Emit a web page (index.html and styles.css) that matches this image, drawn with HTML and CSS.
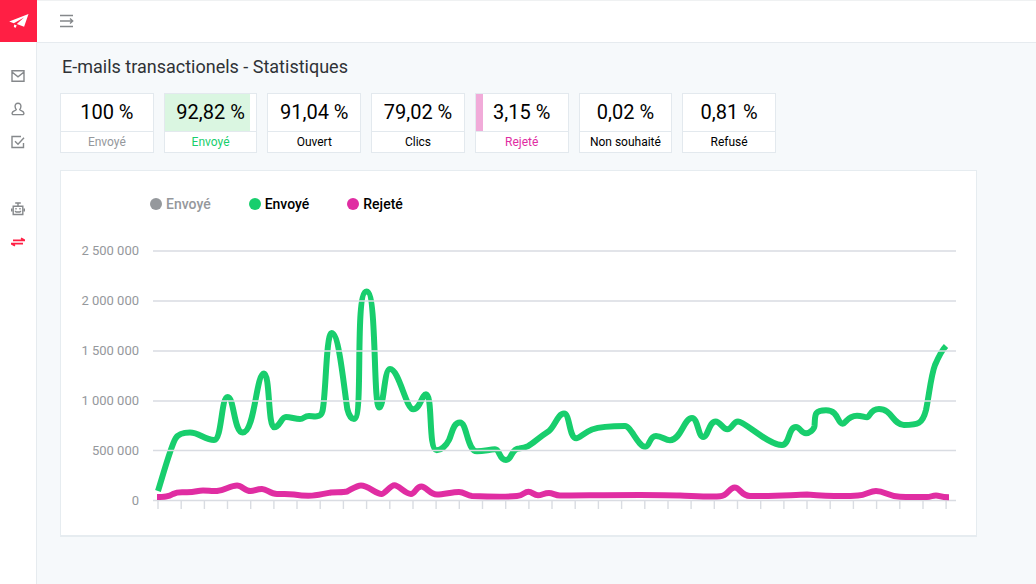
FILE: index.html
```html
<!DOCTYPE html>
<html lang="fr">
<head>
<meta charset="utf-8">
<meta name="viewport" content="width=device-width, initial-scale=1">
<title>E-mails transactionels - Statistiques</title>
<link rel="stylesheet" href="styles.css">
</head>
<body>
<div class="app">
  <aside class="sidebar">
    <a class="logo" href="#" aria-label="Accueil">
      <svg width="20" height="16" viewBox="0 0 20 16" fill="#fff"><path d="M19.500 1 .2 8.400l4.600 1.900L15 4.600 7.800 10.900l7.300 2.800zM5.300 11.600l2.500.9-1.500 2.600-1.500-1.300z"/></svg>
    </a>
    <nav class="nav" aria-label="Menu principal">
      <a class="nav-link" href="#" aria-label="E-mails">
        <svg width="14" height="14" viewBox="0 0 14 14"><path d="M1 1.800h12v10.400H1zM1 3l6 4.800L13 3"/></svg>
      </a>
      <a class="nav-link" href="#" aria-label="Contacts">
        <svg width="14" height="14" viewBox="0 0 14 14"><path d="M7 1.200c2 0 3 1.500 2.900 3.300C9.800 6 9.200 7 8.700 7.600c.3 1.200 3.900 1 4.200 3.500.1.900-.5 1.500-1.400 1.500h-9c-.9 0-1.500-.6-1.400-1.500C1.400 8.600 5 8.800 5.300 7.600 4.800 7 4.200 6 4.100 4.500 4 2.700 5 1.200 7 1.200z"/></svg>
      </a>
      <a class="nav-link" href="#" aria-label="Formulaires">
        <svg width="14" height="14" viewBox="0 0 14 14"><path d="M10 1.500H1v11h11.500V8M4 6.300l3 3 6-6.600"/></svg>
      </a>
      <a class="nav-link nav-link-spaced" href="#" aria-label="Automatisation">
        <svg width="14" height="14" viewBox="0 0 14 14"><path d="M2.200 4.200h9.600v8.300H2.200zM7 4V1M4.200 1h5.600M.6 6.500v3M13.400 6.500v3M4.500 10h5M4.500 10V8.800M9.500 10V8.800"/><path d="M4.300 6.700h1.400M8.300 6.700h1.400"/></svg>
      </a>
      <a class="nav-link nav-link-active" href="#" aria-label="Transactionnel" aria-current="page">
        <svg width="14" height="14" viewBox="0 0 14 14"><path d="M2 5.300h11.500L10 3.300M12 8.700H.5L4 10.700"/></svg>
      </a>
    </nav>
  </aside>

  <div class="page">
    <header class="topbar">
      <button class="menu-button" type="button" aria-label="Déplier le menu">
        <svg width="14" height="14" viewBox="0 0 14 14"><path d="M0 1.500h13M0 7h12.500M0 12.500h13M10 4.500 12.700 7 10 9.500"/></svg>
      </button>
    </header>

    <main class="content">
      <h1 class="title">E-mails transactionels - Statistiques</h1>

      <ul class="stats">
        <li class="stat stat-muted"><span class="stat-value">100 %</span><span class="stat-label">Envoyé</span></li>
        <li class="stat stat-sent"><span class="stat-value"><span class="stat-fill" style="width:92.82%"></span><span class="stat-number">92,82 %</span></span><span class="stat-label">Envoyé</span></li>
        <li class="stat"><span class="stat-value">91,04 %</span><span class="stat-label">Ouvert</span></li>
        <li class="stat"><span class="stat-value">79,02 %</span><span class="stat-label">Clics</span></li>
        <li class="stat stat-rejected"><span class="stat-value"><span class="stat-fill" style="width:8%"></span><span class="stat-number">3,15 %</span></span><span class="stat-label">Rejeté</span></li>
        <li class="stat"><span class="stat-value">0,02 %</span><span class="stat-label">Non souhaité</span></li>
        <li class="stat"><span class="stat-value">0,81 %</span><span class="stat-label">Refusé</span></li>
      </ul>

      <section class="panel" aria-label="Évolution des envois">
        <ul class="legend">
          <li class="legend-item legend-muted"><span class="dot dot-grey"></span>Envoyé</li>
          <li class="legend-item"><span class="dot dot-green"></span>Envoyé</li>
          <li class="legend-item"><span class="dot dot-pink"></span>Rejeté</li>
        </ul>
        <div class="chart">
          <div class="axis">
            <span>2 500 000</span><span>2 000 000</span><span>1 500 000</span><span>1 000 000</span><span>500 000</span><span>0</span>
          </div>
          <svg class="plot" viewBox="153 226 803 300" preserveAspectRatio="none" aria-hidden="true">
            <path class="ticks" d="M158 500v9M181.200 500v9M204.400 500v9M227.500 500v9M250.700 500v9M273.900 500v9M297 500v9M320.200 500v9M343.400 500v9M366.600 500v9M389.800 500v9M413 500v9M436.100 500v9M459.300 500v9M482.500 500v9M505.700 500v9M528.900 500v9M552 500v9M575.200 500v9M598.400 500v9M621.600 500v9M644.800 500v9M668 500v9M691.100 500v9M714.300 500v9M737.500 500v9M760.700 500v9M783.900 500v9M807 500v9M830.200 500v9M853.400 500v9M876.600 500v9M899.800 500v9M923 500v9M946.100 500v9"/>
            <path class="grid" d="M153 500.500h803"/>
            <path class="line line-green" d="M158 491C163 475 171 446 175.500 438.500C178 434 184 432.500 190 432.500C199 432.500 205 440 214 440C222 440 221 397 227.700 397C234 397 234 432.500 242.700 432.500C255 432.500 256 373.500 264 373.500C270 373.500 268 427.300 274 427.300C280 427.300 281 417 286 417C291 417 295 419 300 419C304 419 304 416 309 416C312 416 314 416.700 317 416.300C320 416 321.500 415 322.500 411C326 396 326 333 331.700 333C339 333 344 388 347.300 409C348.500 414 351 419 354 419C364 419 354 291.500 366.700 291.500C377 291.500 373 407.500 379.300 407.500C384 407.500 384 369 390 369C399 369 406 409.300 413.300 409.300C420 409.300 422 394.300 426 394.300C433 394.300 428 450.300 436.700 450.300C441 450.300 446 446 449 440C452 434 453 422.500 460 422.500C467 422.500 467 451.300 477 451.300C484 451.300 490 449.300 495 449.300C500 449.300 499 460 506 460C512 460 511 448.500 519 448.500C531 447.500 532 442 549 431C555 426 558 413.500 564 413.500C570 413.500 569 438.300 576.300 438.300C580 438.300 583 433 592 429.500C602 426 616 426 625 426C631 426 638 446.700 645.300 446.700C650 446.700 649 436 656 436C662 436 665 440.300 670 440.300C681 440.300 684 418 692 418C698 418 698 437 703.300 437C708 437 709 421.500 715.700 421.500C720 421.500 723 429.300 727.300 429.300C732 429.300 733 421.500 738 421.500C745 421.500 768 445 782 445C790 445 788 427 796 427C800 427 801 433.300 806 433.300C809 433.300 814 430 814.500 426C815.500 416 813 410.300 826 410.300C839 410.300 837 423.700 842.700 423.700C846 423.700 847 415.700 857 415.700C862 415.700 864 417.300 867 417.300C870 417.300 870 409 879 409C892 409 893 425 904 425C918 425 922.500 424 926 410C929 396 931 375 935 365C938 358 942 350 946 346"/>
            <path class="line line-pink" d="M157 497C164 497 168 497 173 494C178 491.500 180 492.300 187 492.300C196 492.300 197 490.500 203 490.500C209 490.500 211 491.500 217 491C225 490 231 485.500 237 485.500C242 485.500 245 491 250.500 491C255 491 256 489 262 489C267 489 270 494 277 494C284 494 287 493.500 294 494.500C310 497 316 495.500 331 492.500C337 492 343 492.500 347 491.500C352 489 357 485.500 361 485.500C368 485.500 376 494 381.500 494C385 494 390 485.300 394.500 485.300C399 485.300 405 494 411 494C415 494 416 486.500 421.500 486.500C426 486.500 430 494.500 437 494.500C444 494.500 452 492 459 492C464 492 467 495.500 472 496C485 496.500 507 497 517 496C524 495.500 524 491.700 528.500 491.700C532 491.700 534 495.300 538 495.300C542 495.300 544 493 549 493C553 493 555 495.500 560 495.500C585 495.500 650 494 680 495.500C695 496 710 497 720 496.300C728 496 729 487.500 734.700 487.500C740 487.500 741 496 750 496C770 496.500 790 495 807 494.500C820 495.500 845 496.500 858 495.500C866 495 870 491 876 491C885 491 888 496.500 900 496.700C911 497 920 497 927 497C931 497 932 495.500 936 495.500C940 495.500 940 497.300 949 497.300"/>
            <path class="grid" d="M153 251h803M153 301h803M153 351h803M153 401h803M153 450.500h803"/>
          </svg>
        </div>
      </section>
    </main>
  </div>
</div>
</body>
</html>
```

FILE: styles.css
```css
* {
  box-sizing: border-box;
}

body {
  margin: 0;
  font-family: Roboto, "Liberation Sans", sans-serif;
  color: #000;
  background: #f6f9fb;
}

ul {
  list-style: none;
  margin: 0;
  padding: 0;
}

.app {
  display: flex;
  min-height: 100vh;
}

.sidebar {
  flex: none;
  width: 37px;
  background: #fff;
  border-right: 1px solid #e6ebef;
}

.logo {
  display: flex;
  align-items: center;
  justify-content: center;
  height: 42px;
  margin-right: -1px;
  background: #ff1f44;
}

.nav {
  display: flex;
  flex-direction: column;
  gap: 19px;
  padding-top: 27px;
}

.nav-link {
  display: flex;
  justify-content: center;
}

.nav-link svg,
.menu-button svg {
  display: block;
  fill: none;
  stroke: #85888b;
  stroke-width: 1.4;
}

.nav-link-spaced {
  margin-top: 34px;
}

.nav-link-active svg {
  stroke: #ff1f44;
  stroke-width: 1.7;
}

.page {
  flex: 1;
  min-width: 0;
}

.topbar {
  display: flex;
  align-items: center;
  height: 43px;
  padding: 0 23px 2px;
  background: #fff;
  border-top: 1px solid #eff1f2;
  border-bottom: 1px solid #e6ebef;
}

.menu-button {
  padding: 0;
  border: 0;
  background: none;
  cursor: pointer;
}

.content {
  padding: 12px 59px 24px 23px;
}

.title {
  margin: 0 2px;
  font-size: 18px;
  line-height: 24px;
  font-weight: 400;
  color: #2f3236;
}

.stats {
  display: grid;
  grid-template-columns: repeat(7, 1fr);
  gap: 10px;
  max-width: 716px;
  margin-top: 14px;
}

.stat {
  display: flex;
  flex-direction: column;
  text-align: center;
  background: #fff;
  border: 1px solid #e3e9ee;
}

.stat-value {
  position: relative;
  font-size: 20px;
  line-height: 37px;
  border-bottom: 1px solid #e3e9ee;
}

.stat-fill {
  position: absolute;
  inset: 0 auto 0 0;
}

.stat-number {
  position: relative;
}

.stat-label {
  font-size: 12px;
  line-height: 20px;
}

.stat-muted .stat-label {
  color: #95989c;
}

.stat-sent .stat-label {
  color: #18ce6d;
}

.stat-sent .stat-fill {
  background: #daf6e1;
}

.stat-rejected .stat-label {
  color: #e02da2;
}

.stat-rejected .stat-fill {
  background: #f1abd9;
}

.panel {
  margin-top: 17px;
  padding: 23px 20px 9px;
  background: #fff;
  border: 1px solid #e6ecf0;
  border-bottom-width: 2px;
}

.legend {
  display: flex;
  gap: 38px;
  padding-left: 69px;
}

.legend-item {
  display: flex;
  align-items: center;
  gap: 4px;
  font-size: 14px;
  line-height: 20px;
  font-weight: 500;
}

.legend-muted {
  color: #95989c;
}

.dot {
  width: 12px;
  height: 12px;
  border-radius: 50%;
}

.dot-grey {
  background: #95989c;
}

.dot-green {
  background: #18ce6d;
}

.dot-pink {
  background: #e02da2;
}

.chart {
  display: flex;
  gap: 14px;
  margin-top: 12px;
}

.axis {
  display: flex;
  flex-direction: column;
  width: 58px;
  font-size: 13px;
  line-height: 50px;
  color: #95989c;
  text-align: right;
  white-space: nowrap;
}

.plot {
  display: block;
  flex: 1;
  min-width: 0;
  height: 300px;
}

.plot path {
  fill: none;
  vector-effect: non-scaling-stroke;
}

.grid {
  stroke: #d9dce2;
  stroke-width: 1.6;
}

.ticks {
  stroke: #d9dce2;
  stroke-width: 1.4;
}

.line {
  stroke-width: 6;
  stroke-linejoin: round;
}

.plot .line-green {
  stroke: #18ce6d;
}

.plot .line-pink {
  stroke: #e02da2;
}
```
